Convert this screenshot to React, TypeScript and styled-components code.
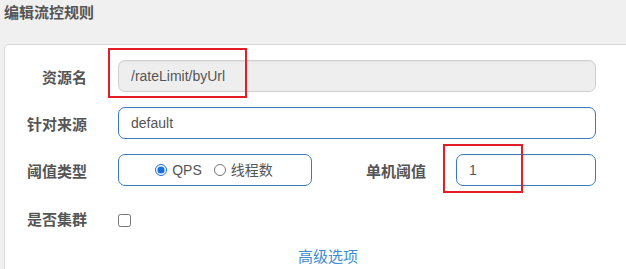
import React from "react";
import styled, { createGlobalStyle } from "styled-components";

const Global = createGlobalStyle`
  html, body { margin: 0; padding: 0; }
  body {
    background: #f0f0f0;
    font-family: "Liberation Sans", "Noto Sans CJK SC", sans-serif;
    overflow: hidden;
  }
`;

const Page = styled.div`
  position: relative;
  width: 626px;
  height: 269px;
  overflow: hidden;
  background: #f0f0f0;
`;

const Header = styled.div`
  box-sizing: border-box;
  height: 44px;
  padding: 3px 4px 0;
`;

const Title = styled.h4`
  margin: 0;
  font-size: 15px;
  line-height: 20px;
  font-weight: 700;
  color: #555;
`;

const Card = styled.div`
  box-sizing: border-box;
  margin-left: 4px;
  height: 225px;
  background: #fff;
  border: 1px solid #dcdcdc;
  border-right: none;
  border-bottom: none;
  border-top-left-radius: 5px;
  padding: 15px 30px 0 0;
`;

const Row = styled.div<{ $h?: number; $mb?: number }>`
  display: flex;
  align-items: center;
  height: ${(p) => p.$h ?? 32}px;
  margin-bottom: ${(p) => p.$mb ?? 15}px;
`;

const Label = styled.label<{ $w?: number; $offset?: boolean }>`
  box-sizing: border-box;
  flex: none;
  width: ${(p) => p.$w ?? 82}px;
  margin-right: ${(p) => (p.$w ? 30 : 31)}px;
  text-align: right;
  font-size: 15px;
  font-weight: 700;
  color: #555;
  padding-top: ${(p) => (p.$offset === false ? 0 : 4)}px;
  line-height: 20px;
  white-space: nowrap;
`;

const TextInput = styled.input<{ $disabled?: boolean }>`
  box-sizing: border-box;
  flex: 1;
  min-width: 0;
  height: 32px;
  padding: 0 12px;
  font-family: "Liberation Sans", "Noto Sans CJK SC", sans-serif;
  font-size: 14px;
  color: #555;
  border-radius: 7px;
  outline: none;
  border: 1px solid ${(p) => (p.$disabled ? "#cfcfcf" : "#3a7bbf")};
  background: ${(p) => (p.$disabled ? "#eeeeee" : "#fff")};
  box-shadow: inset 0 1px 1px rgba(0, 0, 0, 0.04);
  &:disabled {
    color: #555;
    -webkit-text-fill-color: #555;
  }
`;

const RadioBox = styled.div`
  box-sizing: border-box;
  flex: none;
  width: 194px;
  height: 32px;
  border: 1px solid #3a7bbf;
  border-radius: 7px;
  display: flex;
  align-items: center;
  justify-content: center;
  gap: 12px;
  padding-right: 2px;
`;

const RadioOption = styled.label`
  display: flex;
  align-items: center;
  gap: 5px;
  font-size: 14px;
  color: #555;
  line-height: 20px;
`;

const Radio = styled.input`
  width: 12px;
  height: 12px;
  margin: 0;
  accent-color: #1a6fe0;
`;

const Checkbox = styled.input`
  width: 13px;
  height: 13px;
  margin: 1px 0 0 0;
`;

const LinkRow = styled.div`
  padding-left: 293px;
  margin-top: 8px;
  line-height: 20px;
`;

const Link = styled.a`
  font-size: 15px;
  color: #3d8bd3;
  text-decoration: none;
`;

const Mark = styled.div`
  position: absolute;
  box-sizing: border-box;
  border: 2px solid #e41e26;
  pointer-events: none;
`;

export default function App() {
  return (
    <>
      <Global />
      <Page>
        <Header>
          <Title>编辑流控规则</Title>
        </Header>
        <Card>
          <Row>
            <Label>资源名</Label>
            <TextInput $disabled disabled value="/rateLimit/byUrl" readOnly />
          </Row>
          <Row>
            <Label>针对来源</Label>
            <TextInput value="default" readOnly />
          </Row>
          <Row>
            <Label>阈值类型</Label>
            <RadioBox>
              <RadioOption>
                <Radio type="radio" name="grade" defaultChecked />
                QPS
              </RadioOption>
              <RadioOption>
                <Radio type="radio" name="grade" />
                线程数
              </RadioOption>
            </RadioBox>
            <Label $w={114}>单机阈值</Label>
            <TextInput value="1" readOnly />
          </Row>
          <Row $h={38} $mb={0}>
            <Label $offset={false}>是否集群</Label>
            <Checkbox type="checkbox" />
          </Row>
          <LinkRow>
            <Link href="#">高级选项</Link>
          </LinkRow>
        </Card>
        <Mark style={{ left: 108, top: 48, width: 139, height: 50 }} />
        <Mark style={{ left: 443, top: 144, width: 80, height: 49 }} />
      </Page>
    </>
  );
}
